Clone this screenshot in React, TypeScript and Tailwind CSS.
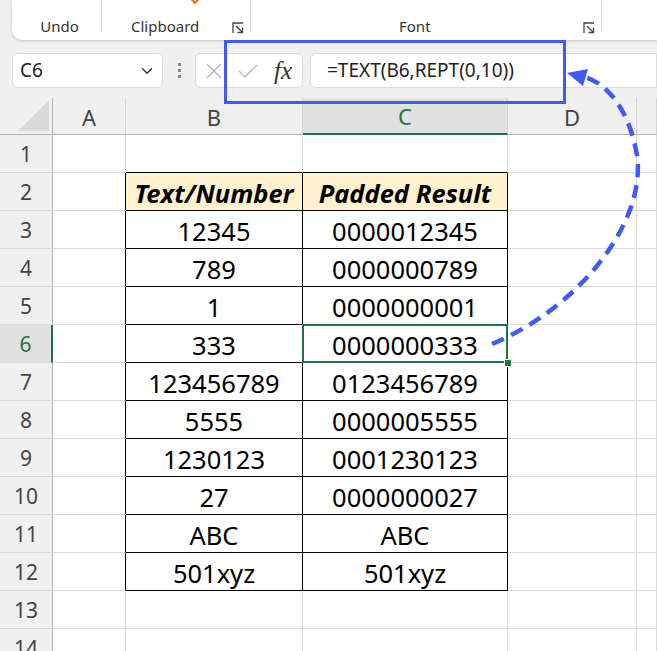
import { ChevronDown } from 'lucide-react';

const cols = ['A', 'B', 'C', 'D', ''];
const colW = ['w-[73px]', 'w-[177px]', 'w-[205px]', 'w-[129px]', 'w-[20px]'];

const data: Record<number, [string, string]> = {
    2: ['Text/Number', 'Padded Result'],
    3: ['12345', '0000012345'],
    4: ['789', '0000000789'],
    5: ['1', '0000000001'],
    6: ['333', '0000000333'],
    7: ['123456789', '0123456789'],
    8: ['5555', '0000005555'],
    9: ['1230123', '0001230123'],
    10: ['27', '0000000027'],
    11: ['ABC', 'ABC'],
    12: ['501xyz', '501xyz'],
};

const rows = Array.from({ length: 14 }, (_, i) => i + 1);

function Launcher() {
    return (
        <svg width="12" height="12" viewBox="0 0 12 12" fill="none" stroke="#444" strokeWidth="1.3">
            <path d="M1 11V1H11" />
            <path d="M4 4L10.5 10.5" />
            <path d="M10.5 5.5V10.5H5.5" />
        </svg>
    );
}

function Cell({ r, c }: { r: number; c: number }) {
    const inTable = r >= 2 && r <= 12;
    const rightBlack = inTable && c <= 2;
    const bottomBlack = r >= 1 && r <= 12 && (c === 1 || c === 2);
    const isHeader = r === 2 && (c === 1 || c === 2);
    const text = data[r] && (c === 1 || c === 2) ? data[r][c - 1] : '';
    const active = r === 6 && c === 2;

    return (
        <div
            className={`relative h-[38px] shrink-0 flex items-center justify-center pt-[4px] border-r border-b ${colW[c]} ${rightBlack ? 'border-r-black' : 'border-r-[#dadada]'} ${bottomBlack ? 'border-b-black' : 'border-b-[#dadada]'} ${isHeader ? 'bg-[#fff2cc] font-bold italic' : 'bg-white'}`}
        >
            <span className="text-[25.5px] text-black leading-none whitespace-nowrap">{text}</span>
            {active && (
                <>
                    <div className="absolute top-[-1px] left-[-1px] right-[-1px] bottom-[-1px] border-2 border-[#217346] z-10" />
                    <div className="absolute right-[-5px] bottom-[-5px] w-[8px] h-[8px] bg-[#217346] border border-white z-20" />
                </>
            )}
        </div>
    );
}

export default function App() {
    return (
        <div className="relative w-[657px] h-[651px] overflow-hidden bg-[#f0f0f0] font-['Noto_Sans',sans-serif] text-[#333]">
            {/* ribbon */}
            <div className="ml-[12px] h-[40px] bg-white rounded-bl-[10px] shadow-[0_1px_3px_rgba(0,0,0,0.18)] flex">
                <div className="w-[89px] h-full flex items-end justify-center pb-[3px] pl-[6px] text-[15px]">Undo</div>
                <div className="w-px h-[32px] bg-[#d6d6d6]" />
                <div className="relative w-[148px] h-full flex items-end pb-[3px]">
                    <div className="absolute left-[90px] top-[-3px] w-[6px] h-[6px] border-r-2 border-b-2 border-[#e8731a] rotate-45" />
                    <span className="ml-[29px] text-[15px]">Clipboard</span>
                    <span className="ml-auto mr-[6px] mb-[3px]"><Launcher /></span>
                </div>
                <div className="w-px h-[32px] bg-[#d6d6d6]" />
                <div className="w-[350px] h-full flex items-end pb-[3px]">
                    <span className="ml-[148px] text-[15px]">Font</span>
                    <span className="ml-auto mr-[6px] mb-[3px]"><Launcher /></span>
                </div>
                <div className="w-px h-[32px] bg-[#d6d6d6]" />
            </div>

            {/* formula bar */}
            <div className="mt-[13px] h-[35px] flex items-center">
                <div className="ml-[12px] w-[151px] h-[35px] bg-white border border-[#dcdcdc] rounded-[6px] flex items-center pl-[7px] pr-[6px]">
                    <span className="text-[19px] text-[#222]">C6</span>
                    <ChevronDown className="ml-auto text-[#333]" size={18} strokeWidth={1.8} />
                </div>
                <div className="w-[32px] flex flex-col items-center gap-[3px]">
                    <div className="w-[3px] h-[3px] bg-[#888]" />
                    <div className="w-[3px] h-[3px] bg-[#888]" />
                    <div className="w-[3px] h-[3px] bg-[#888]" />
                </div>
                <div className="w-[108px] h-[35px] bg-white border border-[#dcdcdc] rounded-[6px] flex items-center">
                    <svg className="ml-[9px]" width="18" height="18" viewBox="0 0 18 18" stroke="#b8b8b8" strokeWidth="1.4">
                        <path d="M2 2L16 16M16 2L2 16" />
                    </svg>
                    <svg className="ml-[15px]" width="20" height="16" viewBox="0 0 20 16" fill="none" stroke="#b8b8b8" strokeWidth="1.4">
                        <path d="M1 8L7 14L19 2" />
                    </svg>
                    <span className="ml-[16px] font-['Liberation_Serif',serif] italic text-[25px] text-[#333] leading-none">fx</span>
                </div>
                <div className="ml-[7px] flex-1 h-[35px] bg-white border border-[#dcdcdc] rounded-l-[6px] flex items-center pl-[16px]">
                    <span className="text-[19px] text-[#222] whitespace-nowrap">=TEXT(B6,REPT(0,10))</span>
                </div>
            </div>

            {/* grid */}
            <div className="mt-[10px]">
                <div className="flex h-[37px]">
                    <div className="relative w-[53px] shrink-0 border-r border-b border-[#b4b4b4]">
                        <svg className="absolute right-[3px] bottom-[3px]" width="31" height="31" viewBox="0 0 31 31">
                            <path d="M31 0V31H0Z" fill="#dadada" />
                        </svg>
                    </div>
                    {cols.map((c, i) => (
                        <div
                            key={i}
                            className={`shrink-0 flex items-center justify-center pt-[2px] text-[22px] border-r border-r-[#d4d4d4] ${colW[i]} ${c === 'C' ? 'bg-[#e1e1e1] text-[#217346] border-b-2 border-b-[#217346]' : 'border-b border-b-[#b4b4b4] text-[#444]'}`}
                        >
                            {c}
                        </div>
                    ))}
                </div>
                {rows.map((r) => (
                    <div key={r} className="flex">
                        <div
                            className={`w-[53px] h-[38px] shrink-0 flex items-center justify-center pt-[2px] text-[21px] border-b border-b-[#dadada] ${r === 6 ? 'bg-[#e1e1e1] text-[#217346] border-r-2 border-r-[#217346]' : 'text-[#444] border-r border-r-[#b4b4b4]'}`}
                        >
                            {r}
                        </div>
                        {cols.map((_, c) => (
                            <Cell key={c} r={r} c={c} />
                        ))}
                    </div>
                ))}
            </div>

            {/* callout overlay */}
            <div className="absolute left-[224px] top-[40px] w-[342px] h-[64px] border-[3px] border-[#4159f5] pointer-events-none" />
            <svg className="absolute inset-0 pointer-events-none" width="657" height="651" viewBox="0 0 657 651">
                <path
                    d="M492 344 C585 305 650 215 636 150 C628 110 608 84 585 77"
                    fill="none"
                    stroke="#4159f5"
                    strokeWidth="4.5"
                    strokeDasharray="13 8"
                />
                <polygon points="567,73 588,69 583,86" fill="#4159f5" />
            </svg>
        </div>
    );
}
